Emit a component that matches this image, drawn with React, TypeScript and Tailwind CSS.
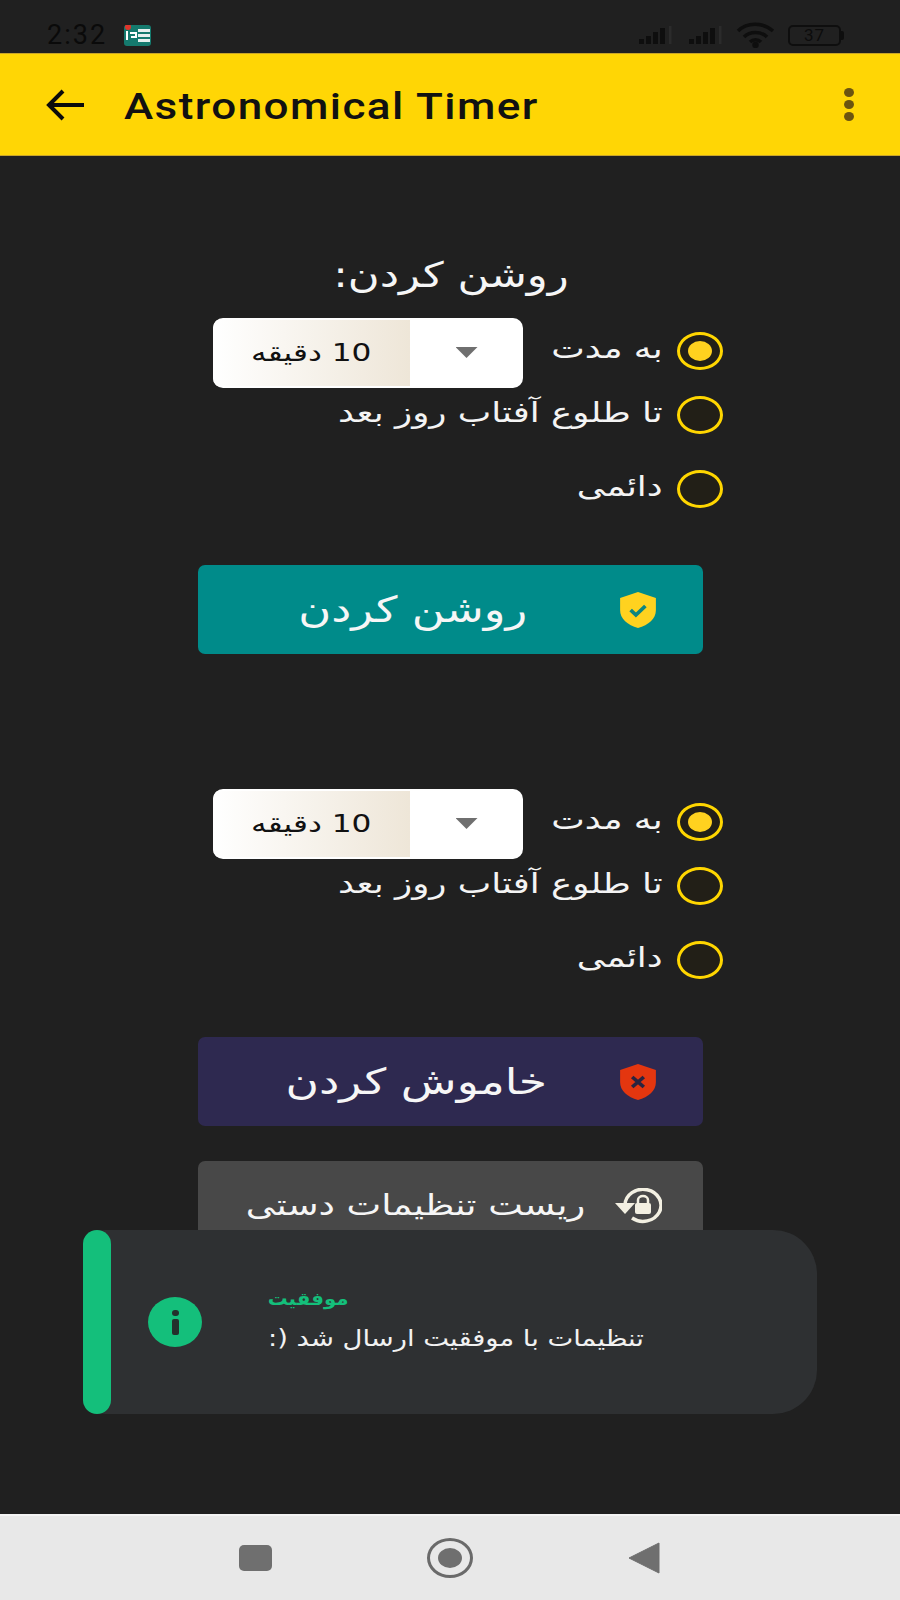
const fa = "font-['DejaVu_Sans','Noto_Sans',sans-serif]";

function Signal() {
  return (
    <svg width="39" height="20" viewBox="0 0 39 20" fill="#0e0e0e">
      <rect x="1" y="14" width="5" height="5" />
      <rect x="8" y="11" width="5" height="8" />
      <rect x="15" y="7" width="5" height="12" />
      <rect x="22" y="3" width="5" height="16" />
      <rect x="31" y="1" width="2.5" height="18" fill="#2b2b2b" />
    </svg>
  );
}

function Radio({ on }: { on?: boolean }) {
  return (
    <div className="w-[46px] h-[38px] rounded-[50%] border-[3.5px] border-[#ffd600] bg-[#221f17] flex items-center justify-center shrink-0">
      {on && <div className="w-[24px] h-[20px] rounded-[50%] bg-[#ffd21f]" />}
    </div>
  );
}

function Label({ children }: { children: string }) {
  return (
    <span dir="rtl" className={`${fa} text-[28px] leading-none text-[#f4f4f4] whitespace-nowrap origin-right scale-x-[1.27] pb-[4px]`}>
      {children}
    </span>
  );
}

function Options() {
  return (
    <div className="w-[525px] flex flex-col">
      <div className="h-[71px] flex items-center pl-[15px]">
        <div className="w-[310px] h-[70px] rounded-[10px] bg-white overflow-hidden flex items-center">
          <div className="w-[197px] h-[66px] bg-gradient-to-r from-white to-[#eee6d8] flex items-center justify-center">
            <span dir="rtl" className={`${fa} text-[24px] text-[#111] whitespace-nowrap scale-x-[1.3]`}>10 دقیقه</span>
          </div>
          <div className="flex-1 flex justify-center">
            <div className="w-[22px] h-[11px] bg-[#6f6f6f] [clip-path:polygon(0_0,100%_0,50%_100%)]" />
          </div>
        </div>
        <div className="flex-1 flex items-center justify-end gap-[14px] pb-[3px]">
          <Label>به مدت</Label>
          <Radio on />
        </div>
      </div>
      <div className="h-[38px] mt-[8px] flex items-center justify-end gap-[14px]">
        <Label>تا طلوع آفتاب روز بعد</Label>
        <Radio />
      </div>
      <div className="h-[38px] mt-[36px] flex items-center justify-end gap-[14px]">
        <Label>دائمی</Label>
        <Radio />
      </div>
    </div>
  );
}

function ActionButton({ bg, text, right, icon, mt, size = "text-[36px]", scale = "scale-x-[1.25]" }: { bg: string; text: string; right: string; icon: React.ReactNode; mt: string; size?: string; scale?: string }) {
  return (
    <div className={`${bg} ${mt} w-[505px] h-[89px] rounded-[7px] flex items-center shrink-0`}>
      <div className={`${right} flex-1 flex justify-end`}>
        <span dir="rtl" className={`${fa} ${size} ${scale} origin-right text-[#f6f6f6] whitespace-nowrap`}>{text}</span>
      </div>
      <div className="w-[38px] mr-[46px] flex justify-center">{icon}</div>
    </div>
  );
}

function Shield({ fill, children }: { fill: string; children: React.ReactNode }) {
  return (
    <svg width="40" height="38" viewBox="0 0 38 38" preserveAspectRatio="none" className="shrink-0">
      <path d="M19 1 L36 7 V19 C36 28 29 34 19 37 C9 34 2 28 2 19 V7 Z" fill={fill} />
      {children}
    </svg>
  );
}

export default function App() {
  return (
    <div className="relative w-[900px] h-[1600px] overflow-hidden flex flex-col bg-[#202020] font-['Roboto',sans-serif]">
      <div className="h-[53px] shrink-0 flex items-center justify-between pl-[47px] pr-[56px] pt-[17px]">
        <div className="flex items-center gap-[17px]">
          <span className="text-[27px] leading-none text-[#0a0a0a] tracking-[2px]">2:32</span>
          <svg width="27" height="21" viewBox="0 0 27 21">
            <rect width="27" height="21" rx="3" fill="#157a6e" />
            <rect x="14" y="4" width="12" height="3" fill="#e6f0ee" />
            <rect x="14" y="9" width="12" height="3" fill="#e6f0ee" />
            <rect x="14" y="14" width="12" height="3" fill="#e6f0ee" />
            <path d="M3 6v9M6 8h6v4H7" stroke="#fff" strokeWidth="2" fill="none" />
            <circle cx="4" cy="2" r="3" fill="#e0352b" />
          </svg>
        </div>
        <div className="flex items-center gap-[11px]">
          <Signal />
          <Signal />
          <svg width="39" height="26" viewBox="0 0 39 26" fill="none" stroke="#0e0e0e" strokeWidth="3.5" className="ml-[-2px]">
            <path d="M2 9 C11 0 27 0 37 9" />
            <path d="M8 15 C14 9 25 9 31 15" />
            <path d="M14 20 C17 17 22 17 25 20" />
            <circle cx="19.5" cy="23" r="1.5" fill="#0e0e0e" />
          </svg>
          <div className="flex items-center ml-[2px]">
            <div className="w-[53px] h-[21px] rounded-[5px] border-2 border-[#0e0e0e] flex items-center justify-center text-[17px] leading-none text-[#0c0c0c] tracking-[1px]">37</div>
            <div className="w-[3px] h-[9px] bg-[#0e0e0e] rounded-r-[2px]" />
          </div>
        </div>
      </div>

      <div className="h-[103px] shrink-0 bg-[#ffd605] border-y border-[#c9a52a] flex items-center pl-[46px] pr-[46px]">
        <svg width="38" height="32" viewBox="0 0 38 32" fill="none" stroke="#0b0b0b" strokeWidth="4">
          <path d="M38 16H4" />
          <path d="M17 2L3 16L17 30" />
        </svg>
        <span className="ml-[40px] pt-[3px] text-[37px] font-medium leading-none text-[#111] whitespace-nowrap tracking-[1.2px] origin-left scale-x-[1.19]">Astronomical Timer</span>
        <div className="ml-auto flex flex-col gap-[3px]">
          <div className="w-[10px] h-[9px] rounded-[50%] bg-[#6b5410]" />
          <div className="w-[10px] h-[9px] rounded-[50%] bg-[#6b5410]" />
          <div className="w-[10px] h-[9px] rounded-[50%] bg-[#6b5410]" />
        </div>
      </div>

      <div className="flex-1 flex flex-col pl-[198px]">
        <div className="w-[505px] mt-[97px] h-[46px] flex justify-center">
          <span dir="rtl" className={`${fa} leading-[44px] text-[35px] text-[#f6f6f6] whitespace-nowrap scale-x-[1.24]`}>روشن کردن:</span>
        </div>
        <div className="mt-[18px]"><Options /></div>
        <ActionButton
          mt="mt-[57px]"
          bg="bg-[#008b8a]"
          text="روشن کردن"
          right="pr-[92px]"
          icon={
            <Shield fill="#ffd21f">
              <path d="M12 19l5 5 9-9" fill="none" stroke="#0d8580" strokeWidth="3.5" />
            </Shield>
          }
        />
        <div className="mt-[134px]"><Options /></div>
        <ActionButton
          mt="mt-[58px]"
          bg="bg-[#2e2950]"
          text="خاموش کردن"
          right="pr-[72px]"
          scale="scale-x-[1.27]"
          icon={
            <Shield fill="#e4360f">
              <path d="M13.5 14l11 10M24.5 14l-11 10" fill="none" stroke="#2a2440" strokeWidth="3.5" />
            </Shield>
          }
        />
        <ActionButton
          mt="mt-[35px]"
          bg="bg-[#484848]"
          text="ریست تنظیمات دستی"
          right="pr-[34px]"
          size="text-[29px]"
          scale="scale-x-[1.27]"
          icon={
            <svg width="48" height="36" viewBox="0 0 48 36" className="shrink-0">
              <path d="M11 17 A18 16 0 1 1 18 30" fill="none" stroke="#f3f0e2" strokeWidth="3.5" />
              <path d="M1 15 H21 L11 26 Z" fill="#f3f0e2" />
              <rect x="21" y="15" width="16" height="11" rx="2" fill="#f3f0e2" />
              <path d="M24 15 V12 a5 4 0 0 1 10 0 V15" fill="none" stroke="#f3f0e2" strokeWidth="2.5" />
            </svg>
          }
        />
      </div>

      <div className="absolute left-[83px] top-[1230px] w-[734px] h-[184px] rounded-r-[44px] rounded-l-[22px] bg-[#2e3032] flex items-center">
        <div className="w-[28px] h-full rounded-[14px] bg-[#14bf7b]" />
        <div className="ml-[37px] w-[54px] h-[50px] rounded-[50%] bg-[#14bf7b] flex flex-col items-center justify-center gap-[3px]">
          <div className="w-[7px] h-[6px] rounded-full bg-[#24302c]" />
          <div className="w-[7px] h-[16px] rounded-[2px] bg-[#24302c]" />
        </div>
        <div className="ml-[65px] w-[377px] flex flex-col gap-[11px] mb-[3px]">
          <div className="w-[82px] flex justify-end">
            <span dir="rtl" className={`${fa} font-bold text-[18px] leading-[24px] text-[#14bf7b] whitespace-nowrap origin-right scale-x-[1.1]`}>موفقیت</span>
          </div>
          <div className="flex justify-end">
            <span dir="rtl" className={`${fa} text-[23px] leading-[32px] text-[#f2f2f2] whitespace-nowrap origin-right scale-x-[1.19]`}>تنظیمات با موفقیت ارسال شد (:</span>
          </div>
        </div>
      </div>

      <div className="h-[86px] shrink-0 bg-[#e8e8e8] flex items-center relative border-t-2 border-[#f4f4f4]">
        <div className="ml-[239px] w-[33px] h-[26px] rounded-[5px] bg-[#6f6f6f]" />
        <div className="ml-[155px] w-[46px] h-[40px] rounded-[50%] border-[3px] border-[#6a6a6a] flex items-center justify-center">
          <div className="w-[24px] h-[20px] rounded-[50%] bg-[#6f6f6f]" />
        </div>
        <svg width="32" height="32" viewBox="0 0 32 32" className="ml-[155px]">
          <path d="M31 1V31L1 16Z" fill="#6f6f6f" stroke="#6f6f6f" strokeLinejoin="round" />
        </svg>
      </div>
    </div>
  );
}
